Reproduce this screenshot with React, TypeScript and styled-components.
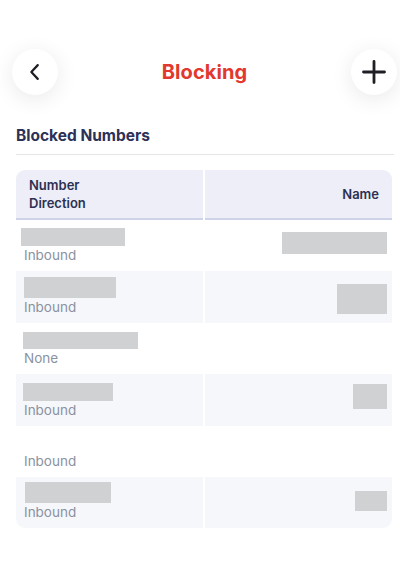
import React from "react";
import styled, { createGlobalStyle } from "styled-components";

const GlobalStyle = createGlobalStyle`
  body {
    margin: 0;
    background: #ffffff;
    font-family: Inter, "Noto Sans", sans-serif;
  }
`;

const Page = styled.div`
  width: 400px;
  height: 573px;
  padding: 49px 8px 0 16px;
  box-sizing: border-box;
  overflow: hidden;
`;

const TopBar = styled.div`
  display: flex;
  align-items: center;
  justify-content: space-between;
  height: 46px;
  margin: 0 -5px 0 -4px;
`;

const RoundButton = styled.button`
  width: 46px;
  height: 46px;
  border-radius: 50%;
  border: none;
  background: #ffffff;
  box-shadow: 0 4px 22px rgba(0, 0, 0, 0.09);
  display: flex;
  align-items: center;
  justify-content: center;
  padding: 0;
`;

const Title = styled.h1`
  margin: 0;
  font-size: 20px;
  font-weight: 700;
  color: #e2382d;
  letter-spacing: 0.1px;
`;

const SectionTitle = styled.h2`
  margin: 31px 0 0;
  font-size: 15.5px;
  line-height: 20px;
  font-weight: 700;
  color: #2c3158;
`;

const Divider = styled.div`
  height: 1px;
  background: #e4e6ea;
  margin: 8px -2px 0 0;
`;

const Table = styled.div`
  margin-top: 15px;
  display: grid;
  grid-template-columns: 1fr 1fr;
  column-gap: 2px;
  border-radius: 9px;
  overflow: hidden;
`;

const HeadCell = styled.div<{ $right?: boolean }>`
  height: 48px;
  background: #eeeef8;
  border-bottom: 2px solid #cfd3ea;
  display: flex;
  align-items: center;
  justify-content: ${(p) => (p.$right ? "flex-end" : "flex-start")};
  padding: 0 ${(p) => (p.$right ? "13px" : "0")} 0 ${(p) => (p.$right ? "0" : "13px")};
  font-size: 13px;
  line-height: 18px;
  font-weight: 600;
  color: #2c3152;
`;

const Cell = styled.div<{ $shaded: boolean }>`
  height: 51.4px;
  box-sizing: border-box;
  background: ${(p) => (p.$shaded ? "#f6f7fb" : "#ffffff")};
`;

const NumberCell = styled(Cell)`
  display: flex;
  flex-direction: column;
  justify-content: flex-end;
  padding: 0 0 7px 8px;
`;

const NameCell = styled(Cell)`
  display: flex;
  align-items: center;
  justify-content: flex-end;
  padding-right: 5px;
`;

const Redacted = styled.div<{ $w: number; $h: number; $x?: number; $y?: number }>`
  width: ${(p) => p.$w}px;
  height: ${(p) => p.$h}px;
  background: #d0d1d3;
  margin-left: ${(p) => p.$x ?? 0}px;
  margin-top: ${(p) => p.$y ?? 0}px;
`;

const Direction = styled.span`
  font-size: 13.5px;
  line-height: 18px;
  color: #8a92a0;
`;

type Row = {
  num?: { w: number; h: number; x: number };
  dir: string;
  name?: { w: number; h: number; x?: number; y?: number };
};

const rows: Row[] = [
  { num: { w: 104, h: 18, x: -3 }, dir: "Inbound", name: { w: 105, h: 22, y: -6 } },
  { num: { w: 92, h: 21, x: 0 }, dir: "Inbound", name: { w: 50, h: 30, y: 3 } },
  { num: { w: 115, h: 17, x: -1 }, dir: "None" },
  { num: { w: 90, h: 18, x: -1 }, dir: "Inbound", name: { w: 34, h: 25, x: 0, y: -7 } },
  { dir: "Inbound" },
  { num: { w: 86, h: 21, x: 1 }, dir: "Inbound", name: { w: 32, h: 20, y: -4 } },
];

const ChevronLeft = () => (
  <svg width="22" height="22" viewBox="0 0 24 24" fill="none">
    <path d="M15 4.5L8 12l7 7.5" stroke="#1d1f24" strokeWidth="2.4" strokeLinecap="round" strokeLinejoin="round" />
  </svg>
);

const Plus = () => (
  <svg width="24" height="24" viewBox="0 0 24 24" fill="none">
    <path d="M12 1.5v21M1.5 12h21" stroke="#1d1f24" strokeWidth="2.8" strokeLinecap="round" />
  </svg>
);

const App = () => {
  return (
    <>
      <GlobalStyle />
      <Page>
        <TopBar>
          <RoundButton aria-label="Back">
            <ChevronLeft />
          </RoundButton>
          <Title>Blocking</Title>
          <RoundButton aria-label="Add">
            <Plus />
          </RoundButton>
        </TopBar>
        <SectionTitle>Blocked Numbers</SectionTitle>
        <Divider />
        <Table>
          <HeadCell>
            Number
            <br />
            Direction
          </HeadCell>
          <HeadCell $right>Name</HeadCell>
          {rows.map((r, i) => (
            <React.Fragment key={i}>
              <NumberCell $shaded={i % 2 === 1}>
                {r.num && <Redacted $w={r.num.w} $h={r.num.h} $x={r.num.x} />}
                <Direction>{r.dir}</Direction>
              </NumberCell>
              <NameCell $shaded={i % 2 === 1}>
                {r.name && <Redacted $w={r.name.w} $h={r.name.h} $x={r.name.x} $y={r.name.y} />}
              </NameCell>
            </React.Fragment>
          ))}
        </Table>
      </Page>
    </>
  );
};

export default App;
